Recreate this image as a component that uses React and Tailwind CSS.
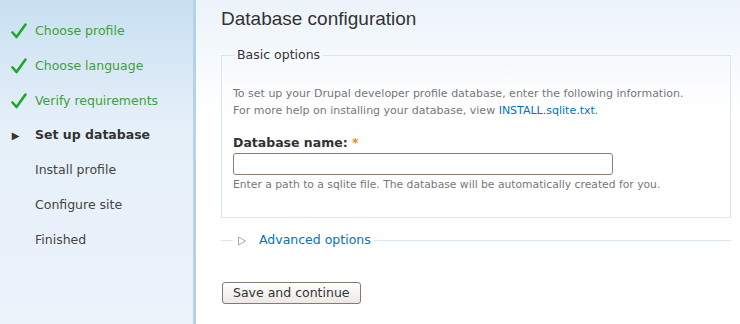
import React from 'react';

const steps = [
  { label: 'Choose profile', state: 'done' },
  { label: 'Choose language', state: 'done' },
  { label: 'Verify requirements', state: 'done' },
  { label: 'Set up database', state: 'active' },
  { label: 'Install profile', state: 'todo' },
  { label: 'Configure site', state: 'todo' },
  { label: 'Finished', state: 'todo' },
];

function Check() {
  return (
    <svg width="16" height="16" viewBox="0 0 16 16">
      <path d="M1.5 9.5 L5.5 14 L14.5 1.5" fill="none" stroke="#21a52b" strokeWidth="2.6" strokeLinecap="round" strokeLinejoin="round" />
    </svg>
  );
}

export default function App() {
  return (
    <div className="flex w-[740px] h-[324px] overflow-hidden font-['DejaVu_Sans',Verdana,sans-serif]">
      {/* Sidebar */}
      <div className="w-[196px] shrink-0 bg-gradient-to-b from-[#c9e0f1] via-[#e6f0f9] via-40% to-[#ebf3fb] border-r-[3px] border-[#b5d2e9] pt-[14px]">
        <ul className="flex flex-col">
          {steps.map((s) => (
            <li key={s.label} className="h-[34.8px] flex items-center">
              <span className="w-[35px] flex justify-center pl-[2px]">
                {s.state === 'done' && <Check />}
                {s.state === 'active' && <span className="text-[10px] text-[#333] -ml-[6px]">▶</span>}
              </span>
              <span
                className={`text-[12.5px] ${
                  s.state === 'done'
                    ? 'text-[#3fa03b]'
                    : s.state === 'active'
                    ? 'text-[#333] font-bold'
                    : 'text-[#444]'
                }`}
              >
                {s.label}
              </span>
            </li>
          ))}
        </ul>
      </div>

      {/* Main */}
      <div className="flex-1 bg-gradient-to-b from-[#ecf3fa] to-white to-35% pl-[25px] pr-[9px]">
        <h1 className="font-['Liberation_Sans',Arial,sans-serif] text-[19px] text-[#333] mt-[7px] leading-[24px]">Database configuration</h1>

        <fieldset className="mt-[15px] border border-[#d9e7f3] px-[11px] pb-[25px] bg-gradient-to-b from-transparent to-white">
          <legend className="px-[3px] ml-[1px] text-[12.5px] text-[#333]">Basic options</legend>
          <p className="mt-[20px] text-[11px] text-[#777] leading-[17px]">
            To set up your Drupal developer profile database, enter the following information.<br />
            For more help on installing your database, view <a className="text-[#0074bd]">INSTALL.sqlite.txt</a>.
          </p>
          <div className="mt-[16px]">
            <label className="block text-[12.5px] font-bold text-[#333] leading-[16px]">
              Database name: <span className="text-[#e09010]">*</span>
            </label>
            <input type="text" className="mt-[2px] block w-[380px] h-[22px] border border-[#8a7d72] rounded-[3px] bg-white" />
            <div className="mt-[3px] text-[10.75px] text-[#777] leading-[14px]">Enter a path to a sqlite file. The database will be automatically created for you.</div>
          </div>
        </fieldset>

        <div className="mt-[13px] flex items-center h-[20px]">
          <div className="w-[12px] border-t border-[#d9e7f3]"></div>
          <svg width="10" height="10" viewBox="0 0 10 10" className="ml-[4px]">
            <path d="M1.5 1 L8.5 5 L1.5 9 Z" fill="none" stroke="#aaa" strokeWidth="1" />
          </svg>
          <a className="ml-[9px] px-[3px] text-[12.5px] text-[#0074bd]">Advanced options</a>
          <div className="flex-1 border-t border-[#d9e7f3]"></div>
        </div>

        <button className="mt-[31px] ml-[1px] h-[22px] px-[10px] border border-[#857a70] rounded-[3px] bg-gradient-to-b from-white to-[#ebe8e5] text-[12.5px] text-[#333] leading-[18px]">
          Save and continue
        </button>
      </div>
    </div>
  );
}
